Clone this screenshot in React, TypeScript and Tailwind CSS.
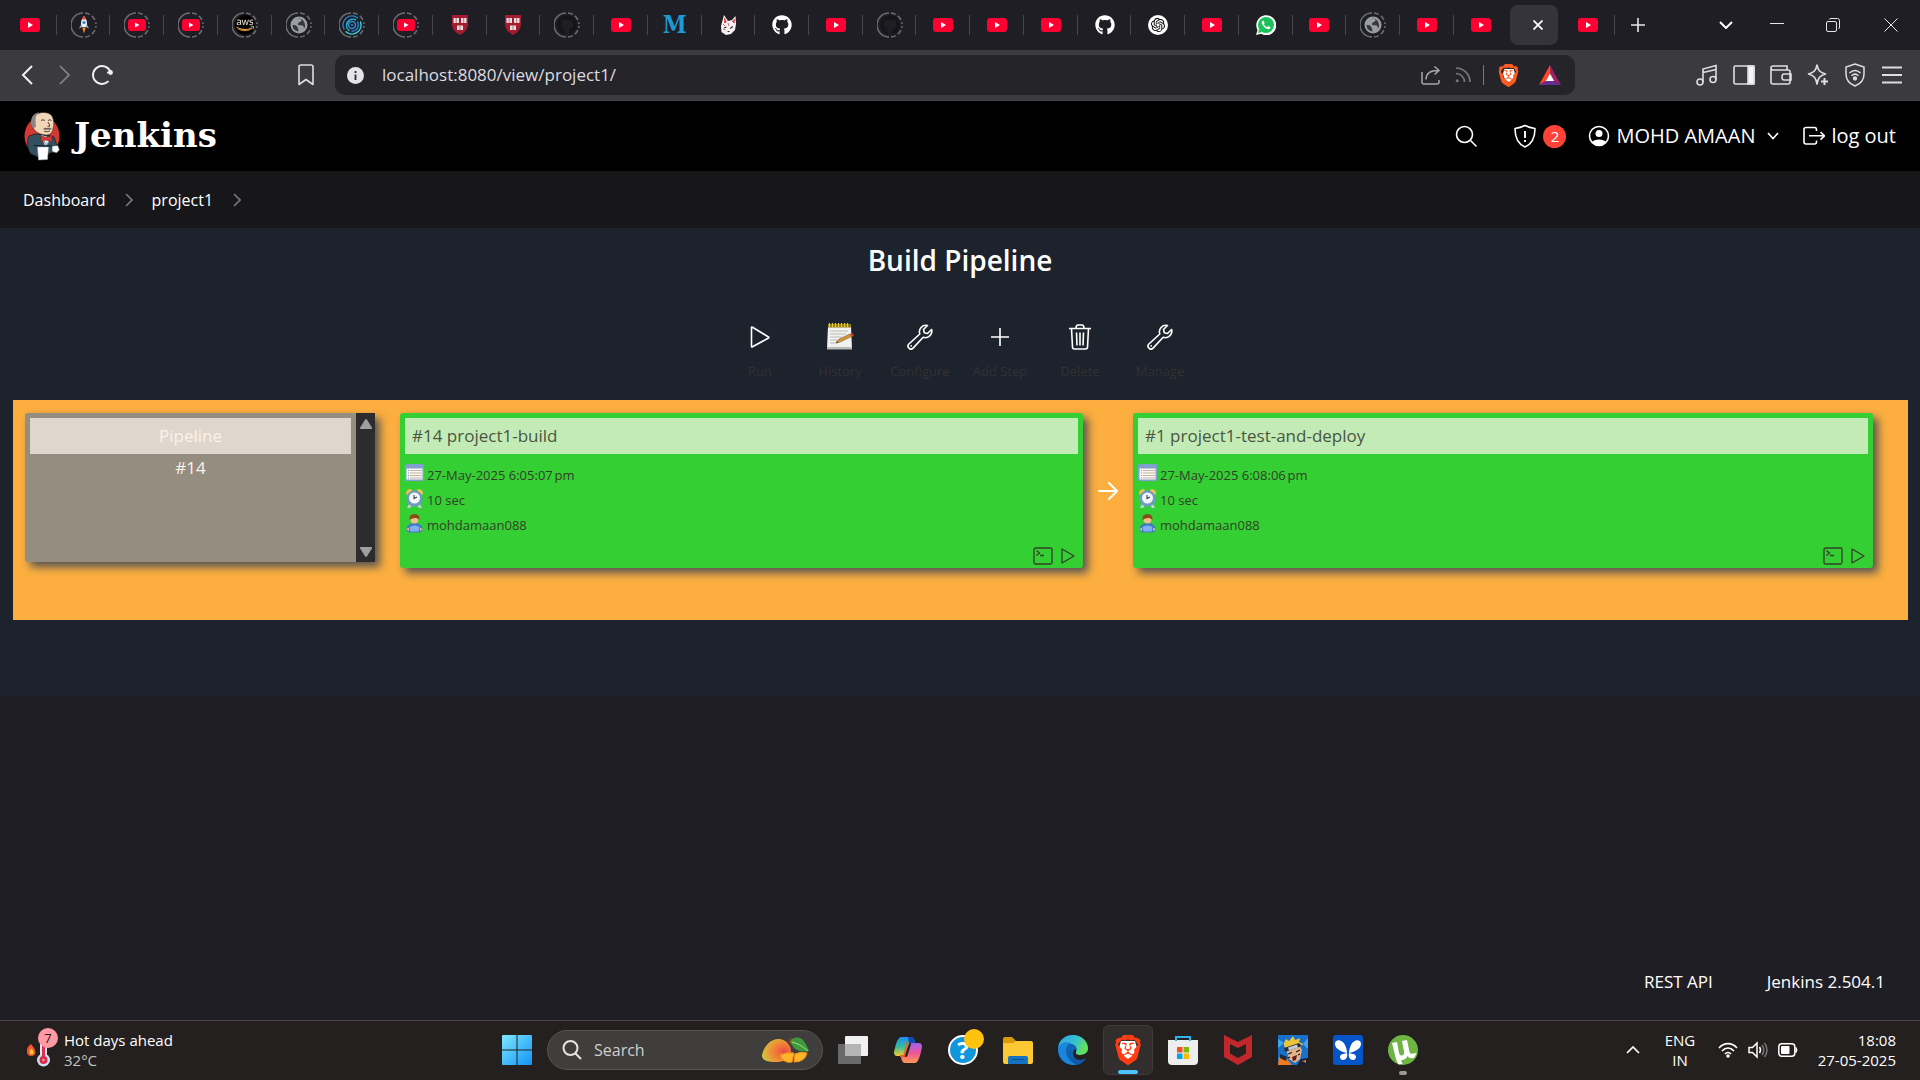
import type { ReactNode } from "react";
import { FaAws, FaGithub } from "react-icons/fa";
import { SiBrave, SiOpenai } from "react-icons/si";

/* ---------- tab icons ---------- */

function YouTube() {
  return (
    <svg viewBox="0 0 20 14" className="h-[14px] w-5">
      <rect width="20" height="14" rx="3" fill="#ff0033" />
      <path d="M8 4l5 3-5 3z" fill="#fff" />
    </svg>
  );
}

function SmallYouTube() {
  return (
    <svg viewBox="0 0 18 12" className="h-3 w-[18px]">
      <rect width="18" height="12" rx="3" fill="#ff0033" />
      <path d="M7 3.500l4.500 2.500L7 8.500z" fill="#fff" />
    </svg>
  );
}

function Rocket() {
  return (
    <svg viewBox="0 0 16 18" className="h-[18px] w-4">
      <path d="M8 0c3 3 3.600 7 2.600 11H5.400C4.400 7 5 3 8 0z" fill="#e8eef5" />
      <path d="M8 0c1.200 1 1.800 2.200 2.200 3.500H5.800C6.200 2.200 6.800 1 8 0z" fill="#e0483a" />
      <circle cx="8" cy="6.500" r="1.600" fill="#3b7fc4" />
      <path d="M5.200 8L3 12.500l2.500-1zM10.800 8L13 12.500l-2.500-1z" fill="#8ea6c4" />
      <path d="M6.200 11.500h3.600L8 17.500z" fill="#ff8a1f" />
    </svg>
  );
}

function Aws() {
  return (
    <span className="relative flex size-5 items-center justify-center rounded-full bg-black">
      <FaAws className="size-[18px] text-[#e2dcd2]" />
      <svg viewBox="0 0 20 20" className="absolute inset-0 size-5" fill="none"><path d="M3 13.500q7 4 14-.5" stroke="#c77a1a" strokeWidth="1.500" /></svg>
    </span>
  );
}

function Globe() {
  return (
    <svg viewBox="0 0 18 18" className="size-[18px]">
      <circle cx="9" cy="9" r="8.500" fill="#9a9da1" />
      <path d="M2.500 9c2 0 4 .2 4.500 1.500S8.500 12 8.500 15.500A7 7 0 0 1 2.500 9zM8 2.200c1 .8 3.500.3 3.500 2S8 6 8 8s3 1 4.500 1.500 1.800 2.500 1 4A7 7 0 0 0 8 2.200z" fill="#36383c" />
    </svg>
  );
}

function Swirl() {
  return (
    <svg viewBox="0 0 20 20" className="size-5" fill="none" strokeWidth="1.500" strokeLinecap="round">
      <path d="M15.500 2.800A9 9 0 0 0 2 14" stroke="#2f79c9" />
      <path d="M4 16.700A9 9 0 0 0 18.500 7" stroke="#35d0e0" />
      <path d="M13.500 4.800A6.300 6.300 0 0 0 7 15.500" stroke="#22b8d8" />
      <path d="M10 16.300A6.300 6.300 0 0 0 15.500 7" stroke="#2f79c9" />
      <circle cx="10" cy="10" r="3.400" stroke="#2b8fe0" />
      <circle cx="10" cy="10" r="1" fill="#3f8fe0" />
    </svg>
  );
}

function Crest() {
  return (
    <svg viewBox="0 0 18 20" className="h-5 w-[18px]">
      <path d="M1 0h16v9c0 5-3.500 8.500-8 11C4.500 17.500 1 14 1 9z" fill="#a51c30" />
      <path d="M2.500 3h5.500v5H2.500zM10 3h5.500v5H10zM6 10.500h6V15H6z" fill="#e9dcdc" />
      <path d="M5.200 3v5M12.700 3v5M9 10.500V15" stroke="#a0606a" strokeWidth=".8" />
    </svg>
  );
}

function LetterM() {
  return <span className="font-['DejaVu_Serif_Condensed','DejaVu_Serif',serif] text-[24px] leading-5 font-bold text-[#1c9ad6]">M</span>;
}

function Fox() {
  return (
    <svg viewBox="0 0 18 20" className="h-5 w-[18px]">
      <path d="M5 0l4 6 4-1 3.500-4 .5 8-1 6-4 4-5 1-4.500-3L2 11z" fill="#f4f2f4" />
      <path d="M5.500 3l1.800 4-1.800 1zM15.500 4l-.3 4-1.700-1.500zM4 9l2 2M9 8l1 3M4 14l2.500 1" fill="#d8434a" stroke="#d8434a" strokeWidth=".8" />
      <path d="M5 13l2.500-1M11 13.500l3-2M8.500 16.500l2 0" stroke="#33262c" strokeWidth="1.100" />
    </svg>
  );
}

function OpenAi() {
  return (
    <span className="flex size-5 items-center justify-center rounded-full bg-white">
      <SiOpenai className="size-[14px] text-black" />
    </span>
  );
}

function WhatsApp() {
  return (
    <svg viewBox="0 0 20 20" className="size-5">
      <path d="M0 20l1.500-5A10 10 0 1 1 5 18.700z" fill="#fff" />
      <circle cx="10" cy="10" r="8" fill="#1bc25a" />
      <path d="M2 18l1-4 3 3z" fill="#1bc25a" />
      <path d="M7 5.500c-1.500.8-1.500 2.500-.5 4.300 1.200 2.200 3 3.800 5.200 4.300 1.500.3 2.800-.6 2.800-1.900l-2.300-1.300-1.100 1.300c-1.500-.6-2.700-1.800-3.300-3.200l1-1.100z" fill="#fff" />
    </svg>
  );
}

function Ring({ children }: { children: ReactNode }) {
  return (
    <span className="relative flex size-6 items-center justify-center">
      <svg viewBox="0 0 26 26" className="absolute -inset-px size-[26px]" fill="none" stroke="#6b6b70" strokeWidth="1.600">
        <path d="M12 1a12 12 0 0 0 0 24" />
        <path d="M14 1a12 12 0 0 1 11 11M14 25a12 12 0 0 0 11-11" strokeDasharray="5 2.500" />
      </svg>
      {children}
    </span>
  );
}

const ringedYouTube = <Ring><SmallYouTube /></Ring>;
const ringedGlobe = <Ring><Globe /></Ring>;
const sleepingGithub = <Ring><FaGithub className="size-5 text-[#151518]" /></Ring>;
const github = <FaGithub className="size-5 text-white" />;

const tabs: { label: string; icon: ReactNode; active?: boolean }[] = [
  { label: "YouTube", icon: <YouTube /> },
  { label: "Rocket", icon: <Ring><Rocket /></Ring> },
  { label: "YouTube", icon: ringedYouTube },
  { label: "YouTube", icon: ringedYouTube },
  { label: "AWS", icon: <Ring><Aws /></Ring> },
  { label: "Page", icon: ringedGlobe },
  { label: "Swirl", icon: <Ring><Swirl /></Ring> },
  { label: "YouTube", icon: ringedYouTube },
  { label: "Course", icon: <Crest /> },
  { label: "Course", icon: <Crest /> },
  { label: "GitHub", icon: sleepingGithub },
  { label: "YouTube", icon: <YouTube /> },
  { label: "M", icon: <LetterM /> },
  { label: "Fox", icon: <Fox /> },
  { label: "GitHub", icon: github },
  { label: "YouTube", icon: <YouTube /> },
  { label: "GitHub", icon: sleepingGithub },
  { label: "YouTube", icon: <YouTube /> },
  { label: "YouTube", icon: <YouTube /> },
  { label: "YouTube", icon: <YouTube /> },
  { label: "GitHub", icon: github },
  { label: "ChatGPT", icon: <OpenAi /> },
  { label: "YouTube", icon: <YouTube /> },
  { label: "WhatsApp", icon: <WhatsApp /> },
  { label: "YouTube", icon: <YouTube /> },
  { label: "Page", icon: ringedGlobe },
  { label: "YouTube", icon: <YouTube /> },
  { label: "YouTube", icon: <YouTube /> },
  { label: "Jenkins", icon: null, active: true },
  { label: "YouTube", icon: <YouTube /> },
];

function TabStrip() {
  return (
    <div className="flex h-[50px] items-center bg-[#1f1e24] pl-[3px]">
      <div className="flex h-full min-w-0 flex-1 items-center">
        {tabs.map((tab, i) => {
          const bare = tab.active || tabs[i + 1]?.active;
          return (
            <div key={i} className="relative flex h-full min-w-0 flex-1 items-center justify-center">
              {tab.active ? (
                <button aria-label="Close tab" className="flex h-10 w-12 items-center justify-center rounded-lg bg-[#34343a] pl-2">
                  <svg viewBox="0 0 10 10" className="size-[10px]" stroke="#fff" strokeWidth="1.800"><path d="M.5.5l9 9M9.500.5l-9 9" /></svg>
                </button>
              ) : (
                <button aria-label={tab.label} className="flex h-10 w-12 items-center justify-center">{tab.icon}</button>
              )}
              {!bare && <span className="absolute right-0 h-5 w-px bg-[#46464c]" />}
            </div>
          );
        })}
      </div>
      <div className="flex w-[305px] shrink-0 items-center justify-end pr-[22px] pl-4">
        <button aria-label="New tab" className="mr-auto"><svg viewBox="0 0 14 14" className="size-[14px]" stroke="#e6e6e8" strokeWidth="1.600"><path d="M7 0v14M0 7h14" /></svg></button>
        <button aria-label="Search tabs"><svg viewBox="0 0 14 8" className="h-2 w-[14px]" fill="none" stroke="#fff" strokeWidth="2"><path d="M1 1l6 6 6-6" /></svg></button>
        <button aria-label="Minimise" className="ml-[37px]"><svg viewBox="0 0 14 14" className="size-[14px]" stroke="#e6e6e8"><path d="M0 5.500h14" /></svg></button>
        <button aria-label="Restore" className="ml-[42px]"><svg viewBox="0 0 14 14" className="size-[14px]" fill="none" stroke="#e6e6e8"><rect x=".5" y="3.500" width="10" height="10" rx="1.500" /><path d="M3 1.500Q3.500.5 5 .5h6.500q2 0 2 2V9q0 1.500-1 2" /></svg></button>
        <button aria-label="Close" className="ml-11"><svg viewBox="0 0 14 14" className="size-[14px]" stroke="#e6e6e8"><path d="M.5.5l13 13M13.500.5l-13 13" /></svg></button>
      </div>
    </div>
  );
}

/* ---------- address bar ---------- */

function AddressRow() {
  return (
    <div className="flex h-[51px] items-center border-b border-[#45454a] bg-[#3b3a3f] pr-[17px] pl-[19px]">
      <div className="flex w-[316px] shrink-0 items-center">
        <button aria-label="Back" className="flex w-4 justify-center"><svg viewBox="0 0 12 20" className="h-5 w-3" fill="none" stroke="#f2f2f4" strokeWidth="2"><path d="M11 1L2 10l9 9" /></svg></button>
        <button aria-label="Forward" className="ml-[22px] flex w-4 justify-center"><svg viewBox="0 0 12 20" className="h-5 w-3" fill="none" stroke="#85858a" strokeWidth="1.700"><path d="M1 1l9 9-9 9" /></svg></button>
        <button aria-label="Reload" className="ml-[18px]">
          <svg viewBox="0 0 22 22" className="size-[22px]" fill="none" stroke="#f2f2f4" strokeWidth="1.900"><path d="M17.500 17.200A9 9 0 1 1 19.500 8" /><circle cx="19.500" cy="8.500" r="2.400" fill="#f2f2f4" stroke="none" /><path d="M16 8.500h4" strokeWidth="1.600" /></svg>
        </button>
        <button aria-label="Bookmark" className="mr-[21px] ml-auto">
          <svg viewBox="0 0 16 22" className="h-[22px] w-4" fill="none" stroke="#dedee2" strokeWidth="1.600"><path d="M1 3q0-2 2-2h10q2 0 2 2v17.500l-7-5-7 5z" strokeLinejoin="round" /></svg>
        </button>
      </div>
      <div className="flex h-10 min-w-0 flex-1 items-center rounded-[10px] bg-[#252429] pr-[14px] pl-3">
        <svg viewBox="0 0 17 17" className="size-[17px] shrink-0"><circle cx="8.500" cy="8.500" r="8.500" fill="#e4e3ea" /><path d="M8.500 7.500v5.500M8.500 4v2" stroke="#2a292e" strokeWidth="1.800" /></svg>
        <input aria-label="Address" defaultValue="localhost:8080/view/project1/" className="ml-[18px] min-w-0 flex-1 bg-transparent text-[17px] text-[#dcdce1] outline-none" />
        <button aria-label="Share"><svg viewBox="0 0 20 20" className="size-5" fill="none" stroke="#a5a5aa" strokeWidth="1.500"><path d="M1 7v10q0 2 2 2h13q2 0 2-2v-2M5 14.500c0-6 4-9 12-9M13.500 1.500l4.500 4-4.500 4" /></svg></button>
        <button aria-label="Feed" className="ml-[14px]"><svg viewBox="0 0 16 16" className="size-4" fill="none" stroke="#77777c" strokeWidth="1.700"><path d="M1 1a14 14 0 0 1 14 14M1 6.500A8.500 8.500 0 0 1 9.500 15" /><circle cx="2.200" cy="13.800" r="1.500" fill="#77777c" stroke="none" /></svg></button>
        <span className="ml-3 h-5 w-px bg-[#77777c]" />
        <button aria-label="Brave shields" className="relative ml-[13px] flex items-center justify-center">
          <svg viewBox="0 0 24 24" className="absolute size-4"><path d="M5 3h14l2 7-3 9-6 4-6-4-3-9z" fill="#fff" /></svg>
          <SiBrave className="relative size-[23px] text-[#ff5a1f]" />
        </button>
        <button aria-label="Rewards" className="ml-[19px]">
          <svg viewBox="0 0 22 20" className="h-5 w-[22px]"><path d="M11 0L0 20l7-4 4-7z" fill="#ff4724" /><path d="M11 0l11 20-7-4-4-7z" fill="#9e1f63" /><path d="M0 20h22l-7-4H7z" fill="#662d91" /><path d="M11 8.500L15.200 16H6.800z" fill="#fff" /></svg>
        </button>
      </div>
      <div className="flex w-[328px] shrink-0 items-center justify-end gap-[15px] text-[#dedee2]">
        <button aria-label="Playlist"><svg viewBox="0 0 22 22" className="size-[22px]" fill="none" stroke="currentColor" strokeWidth="1.600"><circle cx="4" cy="18" r="3" /><circle cx="17" cy="15.500" r="3" /><path d="M7 18V5l13-3.500v14M7 8.500l13-3" /></svg></button>
        <button aria-label="Sidebar"><svg viewBox="0 0 22 22" className="size-[22px]" fill="none" stroke="currentColor" strokeWidth="1.600"><rect x="1" y="2" width="20" height="18" rx="1.500" /><path d="M15 2h6v18h-6z" fill="#f5f5f7" /></svg></button>
        <button aria-label="Wallet"><svg viewBox="0 0 22 22" className="size-[22px]" fill="none" stroke="currentColor" strokeWidth="1.600"><path d="M1 4v14q0 2 2 2h15q2 0 2-2V8q0-2-2-2H3Q1 6 1 4q0-2 2-2h14v4M21 10h-7q-2 0-2 3t2 3h7z" /></svg></button>
        <button aria-label="Assistant"><svg viewBox="0 0 22 22" className="size-[22px]" fill="none" stroke="currentColor" strokeWidth="1.600" strokeLinejoin="round"><path d="M10 1c1 5.500 3 7.500 8.500 9C13 11.500 11 14 10 20 9 14 7 11.500 1.500 10 7 8.500 9 6.500 10 1z" /><path d="M17.500 14v7M14 17.500h7" strokeWidth="2" /></svg></button>
        <button aria-label="VPN"><svg viewBox="0 0 22 24" className="h-6 w-[22px]" fill="none" stroke="currentColor" strokeWidth="1.500"><path d="M11 1l9 3v7c0 6-4 10-9 12-5-2-9-6-9-12V4z" /><path d="M5.500 10c3.500-3.500 7.500-3.500 11 0M7.500 12.700c2.200-2 4.800-2 7 0" /><circle cx="11" cy="15.500" r="1.400" fill="currentColor" /></svg></button>
        <button aria-label="Menu"><svg viewBox="0 0 22 18" className="h-[18px] w-[22px]" stroke="currentColor" strokeWidth="1.800"><path d="M1 1.500h20M1 9h20M1 16.500h20" /></svg></button>
      </div>
    </div>
  );
}

/* ---------- Jenkins page ---------- */

function Butler() {
  return (
    <svg viewBox="0 0 36 50" className="h-[50px] w-9">
      <ellipse cx="18" cy="25" rx="17.500" ry="19.500" fill="#d33833" />
      <path d="M5 25l6-2 12 1 7 2 3 9-2 6-10 2-7 3-7-3C3 38 3 30 5 25z" fill="#335061" stroke="#101c24" strokeWidth=".7" />
      <path d="M8 8C10 1 24-1 28 5c2 4 2.500 9 1 13-1 4-3 6-7 6-5 0-12-3-13-8-2-2-2.500-5-1-8z" fill="#f0d6b7" stroke="#2b211b" strokeWidth=".6" />
      <path d="M7.500 8c1-4 4-6 8-7-3 2-4 5-4 8l.5 7L9 17C7 14 6.500 11 7.500 8z" fill="#85878b" />
      <path d="M17 9.500q2-1.500 4 0M24 9.500q2-1.500 3.500 0M24 11l2 4-2.500.5M20 20q3 1.500 6 0" fill="none" stroke="#2b211b" strokeWidth=".8" />
      <path d="M19 18q2-2 4.500-1 2.500-1 4.500 1-2 1-4.500.5-2.500.8-4.500-.5z" fill="#6d6560" />
      <path d="M17 24l4 11 6-8z" fill="#fff" />
      <path d="M17 24.500l5 2 6-2v6.500l-6-2-5 2z" fill="#d33833" stroke="#7a1512" strokeWidth=".5" />
      <path d="M20 30l2 5 3-4" stroke="#7d98a8" fill="#c3d2da" strokeWidth=".8" />
      <path d="M13.500 36h11l-1 12.500-9 .5z" fill="#fff" stroke="#9aa4ab" strokeWidth=".5" />
      <path d="M28 35l6-.5 1.500 4.500-3 3-4.500-1.500z" fill="#fff" stroke="#39444c" strokeWidth=".6" />
      <path d="M10 34.500l18 .5" stroke="#101c24" strokeWidth="1" />
    </svg>
  );
}

function JenkinsHeader() {
  return (
    <header className="flex h-[70px] items-center bg-black pr-6 pl-6 text-white">
      <a href="#home" className="flex items-center">
        <Butler />
        <span className="ml-[14px] pb-[3px] font-['DejaVu_Serif',serif] text-[34px] leading-10 font-bold">Jenkins</span>
      </a>
      <div className="ml-auto flex items-center text-[20px]">
        <button aria-label="Search"><svg viewBox="0 0 22 22" className="size-[22px]" fill="none" stroke="#fff" strokeWidth="1.600"><circle cx="9.500" cy="9.500" r="8" /><path d="M15.500 15.500l5.500 5.500" strokeLinecap="round" /></svg></button>
        <button aria-label="Security warnings" className="ml-9 flex items-center gap-[6px]">
          <svg viewBox="0 0 24 24" className="size-6" fill="none" stroke="#fff" strokeWidth="1.600"><path d="M12 1.500c3 1.500 6 2.500 10 3C22 14 19 20 12 23 5 20 2 14 2 4.500c4-.5 7-1.500 10-3z" strokeLinejoin="round" /><path d="M12 7v7M12 16v2" strokeWidth="1.900" /></svg>
          <span className="flex size-[23px] items-center justify-center rounded-full bg-[#ff4238] text-[15px] leading-5">2</span>
        </button>
        <a href="#user" className="ml-[22px] flex items-center">
          <svg viewBox="0 0 22 22" className="size-[22px]" fill="none"><circle cx="11" cy="11" r="9.500" stroke="#fff" strokeWidth="1.600" /><circle cx="11" cy="8.500" r="3.500" fill="#fff" /><path d="M4 17c2-3.500 12-3.500 14 0-3 4.500-11 4.500-14 0z" fill="#fff" /></svg>
          <span className="ml-[6px]">MOHD AMAAN</span>
          <svg viewBox="0 0 12 8" className="ml-3 h-2 w-3" fill="none" stroke="#fff" strokeWidth="1.600"><path d="M1 1l5 5.500L11 1" /></svg>
        </a>
        <a href="#logout" className="ml-6 flex items-center">
          <svg viewBox="0 0 22 20" className="h-5 w-[22px]" fill="none" stroke="#fff" strokeWidth="1.600"><path d="M13.500 5V3.500Q13.500 1.500 11.500 1.500H3Q1 1.500 1 3.500v12.500Q1 18 3 18h8.500q2 0 2-2v-1.500M6 9.800h15M17.500 6l4 3.800-4 3.800" /></svg>
          <span className="ml-[6px]">log out</span>
        </a>
      </div>
    </header>
  );
}

function CrumbArrow() {
  return <svg viewBox="0 0 8 14" className="h-[14px] w-2" fill="none" stroke="#77777c" strokeWidth="1.600"><path d="M1 1l6 6-6 6" /></svg>;
}

function Breadcrumbs() {
  return (
    <nav aria-label="Breadcrumb" className="flex h-[57px] items-center bg-[#17171a] pl-[23px] text-[16px] text-white">
      <a href="#dashboard">Dashboard</a>
      <span className="mx-[19px]"><CrumbArrow /></span>
      <a href="#project1">project1</a>
      <span className="ml-5"><CrumbArrow /></span>
    </nav>
  );
}

function Wrench() {
  return (
    <svg viewBox="0 0 26 26" className="size-[26px]" fill="none" stroke="#fff" strokeWidth="1.600" strokeLinejoin="round">
      <path d="M20.500 1.500A6.500 6.500 0 0 0 12.800 10L1.900 20a2.900 2.900 0 1 0 4.200 4.100L16.200 13.300A6.500 6.500 0 0 0 24.600 5.500L20.500 9.500 17.300 8.700 16.500 5.500z" />
      <circle cx="4.200" cy="21.800" r=".9" fill="#fff" stroke="none" />
    </svg>
  );
}

function Notepad() {
  return (
    <svg viewBox="0 0 28 28" className="size-7">
      <path d="M2 3h23l1 23H1z" fill="#f1f1ef" />
      <path d="M1 24h25v2.500H1z" fill="#b9b9b6" />
      <path d="M2 1h23v3.500H2z" fill="#8f7a12" />
      <path d="M3.500 0v4M6.500 0v4M9.500 0v4M12.500 0v4M15.500 0v4M18.500 0v4M21.500 0v4" stroke="#e8cf2e" strokeWidth="1.200" />
      <path d="M4 8h18M4 11h16M4 14h12M4 17h7M4 20h6" stroke="#b5b5b3" strokeWidth=".9" />
      <path d="M10 20l2.500-3.500L24 11l1.500 2.500L14 19z" fill="#d79a3a" stroke="#7a531a" strokeWidth=".6" />
      <path d="M24 11l2-1 2 2.500-2 1.200z" fill="#e23b32" />
      <path d="M10 20l1.300-1.800.8 1.200z" fill="#222" />
    </svg>
  );
}

const actions: { label: string; icon: ReactNode }[] = [
  { label: "Run", icon: <svg viewBox="0 0 20 22" className="h-[22px] w-5" fill="none" stroke="#fff" strokeWidth="1.600" strokeLinejoin="round"><path d="M1.500 1.500v19q0 .8 1 .3L18.500 12q.8-.5 0-1L2.500 1.200q-1-.5-1 .3z" /></svg> },
  { label: "History", icon: <Notepad /> },
  { label: "Configure", icon: <Wrench /> },
  { label: "Add Step", icon: <svg viewBox="0 0 20 20" className="size-5" stroke="#fff" strokeWidth="1.600"><path d="M10 1v18M1 10h18" /></svg> },
  { label: "Delete", icon: <svg viewBox="0 0 22 26" className="h-[26px] w-[22px]" fill="none" stroke="#fff" strokeWidth="1.600"><path d="M0 4.500h22M7 4.500Q7 1 9 1h4q2 0 2 3.500M2.500 4.500L3.500 23q0 2 2 2h11q2 0 2-2l1-18.500M7.500 8.500l.5 13M11 8.500v13M14.500 8.500l-.5 13" /></svg> },
  { label: "Manage", icon: <Wrench /> },
];

function CalendarIcon() {
  return (
    <svg viewBox="0 0 19 17" className="h-[17px] w-[19px]">
      <rect width="19" height="17" rx="1.500" fill="#7e9fd0" />
      <path d="M1.500 4.500h16v11h-16z" fill="#fbf7f2" />
      <path d="M5 6.500h12M5 9h12M5 11.500h12M5 14h12" stroke="#c2b3a4" />
      <path d="M3 6.500h1M3 9h1M3 11.500h1M3 14h1" stroke="#6f8fc4" />
    </svg>
  );
}

function ClockIcon() {
  return (
    <svg viewBox="0 0 19 19" className="size-[19px]">
      <path d="M1 5Q1 0 6 0l1 2-5 4zM18 5q0-5-5-5l-1 2 5 4z" fill="#f0c24c" />
      <path d="M4 15l-2 4h3l1.500-2zM15 15l2 4h-3l-1.500-2z" fill="#c7cfd9" />
      <circle cx="9.500" cy="9.500" r="8" fill="#6f9ac8" />
      <circle cx="9.500" cy="9" r="5.500" fill="#f4f7fa" />
      <path d="M9 6v3.500l3-1.500" fill="none" stroke="#3b4148" strokeWidth="1.100" />
    </svg>
  );
}

function PersonIcon() {
  return (
    <svg viewBox="0 0 19 19" className="size-[19px]">
      <path d="M2 13q2-4 7.500-4t7.500 4l1 3-3 2.500H4L1 16z" fill="#4279c8" />
      <path d="M1 15l3-1v3zM18 15l-3-1v3z" fill="#f0c08c" />
      <path d="M4.500 13q5-3 10 0l-1 4.500h-8z" fill="#7fb2f0" />
      <circle cx="9.500" cy="5.500" r="4" fill="#f0c08c" />
      <path d="M4.500 6Q4 0 9.500 0t5 6q-2-2.500-5-2T4.500 6z" fill="#8a4a1a" />
    </svg>
  );
}

function BuildCard({ title, date }: { title: string; date: string }) {
  const rows = [
    { icon: <CalendarIcon />, text: date },
    { icon: <ClockIcon />, text: "10 sec" },
    { icon: <PersonIcon />, text: "mohdamaan088" },
  ];
  return (
    <article className="flex h-[155px] min-w-0 flex-col rounded-[3px] bg-[#33cf33] p-[5px] pb-[3px] text-[#35402a] shadow-[5px_5px_8px_#555]">
      <h2 className="flex h-9 shrink-0 items-center bg-[#c3ebb6] px-[7px] text-[17px] text-[#4b5543]">
        <a href="#build">{title}</a>
      </h2>
      <ul className="mt-[7px]">
        {rows.map((row) => (
          <li key={row.text} className="flex h-[25px] items-center text-[13px]">
            <span className="flex h-5 w-[22px] shrink-0 items-start">{row.icon}</span>
            <span className="pt-[2px] leading-5">{row.text}</span>
          </li>
        ))}
      </ul>
      <div className="mt-auto flex items-center justify-end gap-2 pr-[3px]">
        <button aria-label="Console output"><svg viewBox="0 0 20 18" className="h-[18px] w-5" fill="none" stroke="#35402a" strokeWidth="1.300"><rect x="1" y="1" width="18" height="16" rx="1.500" /><path d="M3.500 3.500l3 2.500-3 2.500M7 8.500h4" /></svg></button>
        <button aria-label="Run"><svg viewBox="0 0 14 16" className="h-4 w-[14px]" fill="none" stroke="#35402a" strokeWidth="1.300" strokeLinejoin="round"><path d="M1 1l12 7-12 7z" /></svg></button>
      </div>
    </article>
  );
}

function PipelineCard() {
  return (
    <article className="flex h-[149px] rounded-l-[3px] bg-[#968d81] shadow-[5px_5px_8px_#555]">
      <div className="min-w-0 flex-1 p-[5px] text-center text-[17px] text-[#fbf3ea]">
        <h2 className="flex h-9 items-center justify-center bg-[#dfd7cc]">Pipeline</h2>
        <p className="leading-7">#14</p>
      </div>
      <div className="flex w-[19px] flex-col items-center justify-between bg-[#2c2c2c] pt-[6px] pb-[5px]">
        <svg viewBox="0 0 12 10" className="h-[10px] w-3"><path d="M5 .8q1-1.400 2 0l5 8q.3 1.200-.8 1.200H.8Q-.3 10 0 8.800z" fill="#9f9f9f" /></svg>
        <svg viewBox="0 0 12 10" className="h-[10px] w-3"><path d="M5 9.200q1 1.400 2 0l5-8Q12.300 0 11.200 0H.8Q-.3 0 0 1.200z" fill="#9f9f9f" /></svg>
      </div>
    </article>
  );
}

function JenkinsPage() {
  return (
    <main className="flex flex-1 flex-col bg-[#1f1e24]">
      <section className="bg-[#1d232c] px-3 pb-[75px]">
        <h1 className="pt-3 text-center text-[28px] leading-10 font-semibold text-white">Build Pipeline</h1>
        <div className="mt-[37px] flex justify-center">
          {actions.map((a) => (
            <button key={a.label} className="flex w-20 flex-col items-center text-[13px] text-[#313133]">
              <span className="flex h-10 items-center">{a.icon}</span>
              <span className="mt-1 leading-5">{a.label}</span>
            </button>
          ))}
        </div>
        <div className="mt-[19px] ml-px grid h-[220px] grid-cols-[350px_25px_683fr_50px_740fr] items-start bg-[#fcae3f] pt-[13px] pr-[35px] pl-3">
          <PipelineCard />
          <span />
          <BuildCard title="#14 project1-build" date={"27-May-2025 6:05:07\u202fpm"} />
          <span className="flex h-[155px] items-center justify-center">
            <svg viewBox="0 0 20 18" className="h-[18px] w-5" fill="none" stroke="#fff" strokeWidth="2" strokeLinecap="round"><path d="M1 9h18M11 1l8 8-8 8" /></svg>
          </span>
          <BuildCard title="#1 project1-test-and-deploy" date={"27-May-2025 6:08:06\u202fpm"} />
        </div>
      </section>
      <footer className="mt-auto flex justify-end gap-[54px] pr-[35px] pb-[26px] text-[17px] leading-6 text-white">
        <a href="#rest">REST API</a>
        <a href="#version">Jenkins 2.504.1</a>
      </footer>
    </main>
  );
}

/* ---------- taskbar ---------- */

const apps: { label: string; icon: ReactNode; state?: "active" | "open" }[] = [
  {
    label: "Task view",
    icon: <svg viewBox="0 0 30 28" className="h-7 w-[30px]"><rect x="7" width="23" height="20" rx="1" fill="#f0f0f0" /><rect y="8" width="23" height="20" rx="1" fill="#6a6a6a" /><path d="M7 8h16v12H7z" fill="#b4b4b4" /></svg>,
  },
  {
    label: "Copilot",
    icon: (
      <svg viewBox="0 0 28 26" className="h-[26px] w-7">
        <defs>
          <linearGradient id="cpa" x1="0" y1="0" x2="0" y2="1"><stop offset="0" stopColor="#1f8cf0" /><stop offset=".5" stopColor="#35b8a0" /><stop offset="1" stopColor="#f2cf2a" /></linearGradient>
          <linearGradient id="cpb" x1="0" y1="0" x2="0" y2="1"><stop offset="0" stopColor="#a060f0" /><stop offset=".5" stopColor="#f0559a" /><stop offset="1" stopColor="#ff9a4a" /></linearGradient>
        </defs>
        <path d="M7 0h10q3 0 4 5h-5l-6 14H3q-3 0-3-4Q3 0 7 0z" fill="url(#cpa)" />
        <path d="M14 0h4q2 0 3 6h-6z" fill="#1146b8" />
        <path d="M6 19l4 0 4-14" fill="none" stroke="#e8642a" strokeWidth="2" />
        <path d="M21 26H11q-3 0-4-6h5l5-14h8q3 0 3 4-3 16-7 16z" fill="url(#cpb)" />
        <path d="M12 19l4-12h1l-4 13z" fill="#23201f" />
      </svg>
    ),
  },
  {
    label: "Get help",
    icon: (
      <span className="relative">
        <span className="flex size-[30px] items-center justify-center rounded-full border-2 border-white bg-[#1196dc] text-[24px] leading-6 font-bold text-white">?</span>
        <span className="absolute -top-[6px] left-4 size-5 rounded-full bg-[#ffc20e]" />
      </span>
    ),
  },
  {
    label: "File Explorer",
    icon: <svg viewBox="0 0 30 27" className="h-[27px] w-[30px]"><path d="M0 2q0-2 2-2h7l4 4v6H0z" fill="#d99a08" /><path d="M0 6h10l3-2h15q2 0 2 2v19q0 2-2 2H2q-2 0-2-2z" fill="#fcc934" /><path d="M5 21q0-2 2-2h16q2 0 2 2v6H5z" fill="#1374c4" /><path d="M9 22.500h12" stroke="#0a4f92" /></svg>,
  },
  {
    label: "Edge",
    icon: (
      <svg viewBox="0 0 30 30" className="size-[30px]">
        <defs>
          <linearGradient id="eg" x1="0" y1="0" x2="1" y2=".4"><stop offset="0" stopColor="#2fa4e8" /><stop offset=".6" stopColor="#35c1d0" /><stop offset="1" stopColor="#66e05a" /></linearGradient>
        </defs>
        <circle cx="15" cy="15" r="15" fill="#0f62b4" />
        <path d="M0 13C1 4 8 0 15 0c9 0 15 7 15 13 0 5-4 7-8 7-3 0-5-1-4-3 2-3 0-7-4-8C8 7 2 9 0 13z" fill="url(#eg)" />
        <path d="M0 13c2-5 8-7 13-5-5 2-6 8-4 13s7 8 12 8C9 33 0 24 0 13z" fill="#1a86dc" />
        <path d="M18 17c-1 2 1 3 4 3 3 0 6-1 8-4v7l-2 0c-4 3-12 3-13-4 0-2 1-4 2-5q1.500 1 1 3z" fill="#23201f" />
        <path d="M12 14q-2 8 5 11 6 2 11-2-3 6-10 7Q10 26 12 14z" fill="#1558a8" />
      </svg>
    ),
  },
  {
    label: "Brave",
    state: "active",
    icon: (
      <span className="relative flex items-center justify-center">
        <svg viewBox="0 0 24 24" className="absolute size-6"><path d="M5 3h14l2 7-3 9-6 4-6-4-3-9z" fill="#fff" /></svg>
        <SiBrave className="relative size-[30px] text-[#ff3c14]" />
      </span>
    ),
  },
  {
    label: "Microsoft Store",
    icon: <svg viewBox="0 0 30 30" className="size-[30px]"><path d="M0 5h30v21q0 4-4 4H4q-4 0-4-4z" fill="#ededed" /><path d="M8 6V2h14v4" fill="none" stroke="#2fb4ec" strokeWidth="2" /><path d="M9 12h5.500v5.500H9z" fill="#f25022" /><path d="M15.500 12H21v5.500h-5.500z" fill="#7fba00" /><path d="M9 18.500h5.500V24H9z" fill="#00a4ef" /><path d="M15.500 18.500H21V24h-5.500z" fill="#ffb900" /></svg>,
  },
  {
    label: "McAfee",
    icon: <svg viewBox="0 0 28 30" className="h-[30px] w-7"><path d="M0 0l14 7L28 0v22l-14 8-14-8z" fill="#c0282c" /><path d="M6 9l8 4 8-4v9.500L14 23l-8-4.500z" fill="#23201f" /></svg>,
  },
  {
    label: "Naruto",
    icon: (
      <svg viewBox="0 0 30 30" className="size-[30px]">
        <path d="M0 0h30v30H0z" fill="#1870c8" />
        <path d="M0 4l6 4-6 5zM30 3l-5 6 5 5z" fill="#39a8f0" />
        <path d="M6 11l0-3 2-4 3 2 4-5 2 4 5-2-1 4 4 2-4 5H8z" fill="#f0c43a" />
        <path d="M8 14l14-2 2 3-2 9-5 4-6-4z" fill="#e6b48c" />
        <path d="M6 13l15-5 3 3-17 6z" fill="#27303f" />
        <path d="M10 12.500l9-3 1 3-9 3z" fill="#c6ccd2" />
        <path d="M10 19l4-1.500M18 17l4-2M12 22l-2 1M20 20l2-1" stroke="#1a1a1a" strokeWidth="1.300" />
        <path d="M14 22l5-2-1 5-3 1z" fill="#6b1d1d" />
        <path d="M0 30l1-8 7 1 6 7z" fill="#ee7a22" />
        <path d="M2 19l7 3-1 4-6-3z" fill="#20283a" />
        <path d="M19 30l4-6 7-1v7z" fill="#1b2030" />
        <path d="M24 26l4-1v3z" fill="#ee7a22" />
      </svg>
    ),
  },
  {
    label: "Butterfly",
    icon: <svg viewBox="0 0 30 30" className="size-[30px]"><rect width="30" height="30" rx="3" fill="#0554c8" /><path d="M14 18C9 17 2 14 2 9c0-5 7-5 10 1 1 2 2 5 2 8zM16 18c5-1 12-4 12-9 0-5-7-5-10 1-1 2-2 5-2 8zM14 18c1 4-1 7-4 7-4 0-4-6 0-6zM16 18c-1 4 1 7 4 7 4 0 4-6 0-6z" fill="#fff" /></svg>,
  },
  {
    label: "uTorrent",
    state: "open",
    icon: <svg viewBox="0 0 30 30" className="size-[30px]"><circle cx="15" cy="15" r="15" fill="#6fb544" /><path d="M4 8l5-1 2 11q1 3 3 2.500 2.500-.5 2-4L14 6l5-1 2.500 12q.5 2.500 4 1.500l3-.5-2 4.500q-5 2-7-1.500-2 4.500-6.500 4l1.500 4-4 .5Q9 27 8 24z" fill="#fff" /></svg>,
  },
];

function Mango() {
  return (
    <svg viewBox="0 0 48 26" className="h-[26px] w-12">
      <defs>
        <radialGradient id="mg" cx=".75" cy=".55" r=".8"><stop offset="0" stopColor="#ee4a48" /><stop offset=".5" stopColor="#f08a35" /><stop offset="1" stopColor="#c9cf3e" /></radialGradient>
      </defs>
      <path d="M0 18C2 8 10 1 18 2c7 1 12 8 11 14-1 7-8 9-15 9C6 25 0 24 0 18z" fill="url(#mg)" />
      <path d="M27 5Q33-2 40 2q4 4 7 12Q34 16 30 8z" fill="#3f9a3c" /><path d="M29 5q8 1 17 9" stroke="#a6dc8a" fill="none" />
      <path d="M28 1l1 6" stroke="#8a4b20" strokeWidth="1.500" />
      <path d="M18 18q7-3 14-2l-2 9q-8 2-12-7zM33 17q6-3 12-1-2 9-13 9z" fill="#ffb52a" stroke="#ff9314" />
    </svg>
  );
}

function Taskbar() {
  return (
    <div className="grid h-[60px] grid-cols-[1fr_auto_1fr] items-center border-t border-[#474645] bg-[#23201f] pb-px text-white">
      <button className="flex items-center pl-[26px] text-left">
        <span className="relative h-10 w-9">
          <svg viewBox="0 0 36 40" className="h-10 w-9">
            <path d="M1 20q0-3 4-6 4 4 4.500 8 0 4-4.500 4T1 20z" fill="#f0562e" /><path d="M3.500 22q0-2 2-3.500 2 2 2 4 0 2-2 2t-2-2.500z" fill="#ffc83a" />
            <path d="M14 8h7v20h-7z" fill="#dbe7f6" /><circle cx="17.500" cy="30" r="6.500" fill="#cfe0f5" /><path d="M16 14h3v14h-3z" fill="#e0304e" /><circle cx="17.500" cy="30" r="4" fill="#d92c4c" /><circle cx="17.500" cy="30" r="1.200" fill="#f6a7b4" />
          </svg>
          <span className="absolute -top-[2px] left-3 flex size-5 items-center justify-center rounded-full bg-[#ff9aa5] text-[13px] leading-4 text-[#1a1a1a]">7</span>
        </span>
        <span className="ml-[2px] flex flex-col text-[15px] leading-5">
          <span>Hot days ahead</span>
          <span className="text-[#c6c4c3]">32°C</span>
        </span>
      </button>
      <div className="flex items-center gap-[5px]">
        <button aria-label="Start" className="flex size-[50px] items-center justify-center">
          <svg viewBox="0 0 30 30" className="size-[30px]">
            <defs><linearGradient id="win" x1="0" y1="0" x2="1" y2="1"><stop offset="0" stopColor="#7fe8ff" /><stop offset="1" stopColor="#1093f5" /></linearGradient></defs>
            <path d="M1 0h13.500v14.500H0V1q0-1 1-1zM15.500 0H29q1 0 1 1v13.500H15.500zM0 15.500h14.500V30H1q-1 0-1-1zM15.500 15.500H30V29q0 1-1 1H15.500z" fill="url(#win)" />
          </svg>
        </button>
        <label className="flex h-10 w-[276px] items-center rounded-full border border-[#565453] bg-[#403e3d] pr-3 pl-[14px]">
          <svg viewBox="0 0 20 20" className="size-5 shrink-0" fill="none" stroke="#e4e4e4" strokeWidth="2"><circle cx="8.500" cy="8" r="7" /><path d="M13.500 13.500L19 19" /></svg>
          <input aria-label="Search" placeholder="Search" className="ml-3 min-w-0 flex-1 bg-transparent text-[16px] text-white outline-none placeholder:text-[#cfcdcc]" />
          <Mango />
        </label>
        {apps.map((app) => (
          <button key={app.label} aria-label={app.label} className={app.state === "active" ? "relative flex size-[50px] items-center justify-center rounded-md border border-[#3d3a39] bg-[#312e2d]" : "relative flex size-[50px] items-center justify-center"}>
            {app.icon}
            {app.state === "active" && <span className="absolute bottom-0 h-1 w-5 rounded-full bg-[#4cc2ff]" />}
            {app.state === "open" && <span className="absolute bottom-0 h-1 w-2 rounded-full bg-[#9a9998]" />}
          </button>
        ))}
      </div>
      <div className="flex items-center justify-end pr-6 text-[15px] leading-5">
        <button aria-label="Show hidden icons"><svg viewBox="0 0 14 8" className="h-2 w-[14px]" fill="none" stroke="#fff" strokeWidth="1.700"><path d="M1 7l6-6 6 6" /></svg></button>
        <button className="ml-6 flex w-8 flex-col items-center"><span>ENG</span><span>IN</span></button>
        <button aria-label="Network, volume and battery" className="ml-[22px] flex items-center gap-[10px]">
          <svg viewBox="0 0 20 16" className="h-4 w-5" fill="none" stroke="#fff" strokeWidth="1.600"><path d="M1 6C6 .2 14 .2 19 6M4 9c3.500-4 8.500-4 12 0M7 12c1.800-2 4.200-2 6 0" /><circle cx="10" cy="14" r="1.700" fill="#fff" stroke="none" /></svg>
          <svg viewBox="0 0 20 18" className="h-[18px] w-5" fill="none" stroke="#fff" strokeWidth="1.500"><path d="M1 6.500h3.500L9 2v14l-4.500-4.500H1zM11.500 6q2 3 0 6" /><path d="M14 4q3.500 5 0 10M16.500 2q5 7 0 14" stroke="#777" /></svg>
          <svg viewBox="0 0 20 14" className="h-[14px] w-5"><rect x=".8" y=".8" width="16" height="12.400" rx="3" fill="none" stroke="#fff" strokeWidth="1.500" /><rect x="3" y="3" width="8.500" height="8" rx="1" fill="#fff" /><path d="M18 4.500q2 2.500 0 5z" fill="#fff" stroke="#fff" /></svg>
        </button>
        <button className="ml-5 flex w-[78px] flex-col items-end whitespace-nowrap"><span>18:08</span><span>27-05-2025</span></button>
      </div>
    </div>
  );
}

export default function App() {
  return (
    <div className="flex min-h-screen flex-col font-['Open_Sans','Noto_Sans',sans-serif]">
      <TabStrip />
      <AddressRow />
      <JenkinsHeader />
      <Breadcrumbs />
      <JenkinsPage />
      <Taskbar />
    </div>
  );
}
